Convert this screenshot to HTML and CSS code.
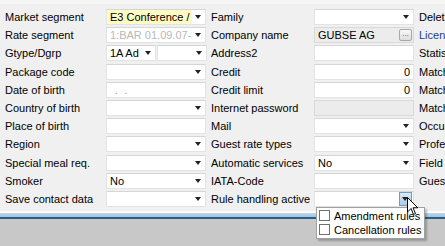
FILE: index.html
```html
<!DOCTYPE html>
<html lang="en">
<head>
    <meta charset="UTF-8">
    <title>Guest profile</title>
    <link rel="stylesheet" href="styles.css">
</head>
<body>
    <div class="panel">
        <div class="form">
            <!-- row 1 -->
            <div class="label">Market segment</div>
            <div class="field combo marked"><span class="val">E3 Conference /</span><span class="arrow"></span></div>
            <div class="label">Family</div>
            <div class="field combo"><span class="val"></span><span class="arrow"></span></div>
            <div class="label side">Delet</div>

            <div class="label">Rate segment</div>
            <div class="field combo"><span class="val muted">1:BAR 01.09.07-3</span><span class="arrow"></span></div>
            <div class="label">Company name</div>
            <div class="field grey"><span class="val">GUBSE AG</span><span class="dots">...</span></div>
            <div class="label side link">Licen</div>

            <div class="label">Gtype/Dgrp</div>
            <div class="pair">
                <div class="field combo"><span class="val">1A Ad</span><span class="arrow"></span></div>
                <div class="field combo"><span class="val"></span><span class="arrow"></span></div>
            </div>
            <div class="label">Address2</div>
            <div class="field"></div>
            <div class="label side">Statis</div>

            <div class="label">Package code</div>
            <div class="field combo"><span class="val"></span><span class="arrow"></span></div>
            <div class="label">Credit</div>
            <div class="field num">0</div>
            <div class="label side">Match</div>

            <div class="label">Date of birth</div>
            <div class="field"><span class="val date">.&nbsp;&nbsp;.</span></div>
            <div class="label">Credit limit</div>
            <div class="field num">0</div>
            <div class="label side">Match</div>

            <div class="label">Country of birth</div>
            <div class="field combo"><span class="val"></span><span class="arrow"></span></div>
            <div class="label">Internet password</div>
            <div class="field grey"></div>
            <div class="label side">Match</div>

            <div class="label">Place of birth</div>
            <div class="field"></div>
            <div class="label">Mail</div>
            <div class="field combo"><span class="val"></span><span class="arrow"></span></div>
            <div class="label side">Occu</div>

            <div class="label">Region</div>
            <div class="field combo"><span class="val"></span><span class="arrow"></span></div>
            <div class="label">Guest rate types</div>
            <div class="field combo"><span class="val"></span><span class="arrow"></span></div>
            <div class="label side">Profe</div>

            <div class="label">Special meal req.</div>
            <div class="field combo"><span class="val"></span><span class="arrow"></span></div>
            <div class="label">Automatic services</div>
            <div class="field combo"><span class="val">No</span><span class="arrow"></span></div>
            <div class="label side">Field</div>

            <div class="label">Smoker</div>
            <div class="field combo"><span class="val">No</span><span class="arrow"></span></div>
            <div class="label">IATA-Code</div>
            <div class="field"></div>
            <div class="label side">Gues</div>

            <div class="label">Save contact data</div>
            <div class="field combo"><span class="val"></span><span class="arrow"></span></div>
            <div class="label">Rule handling active</div>
            <div class="field combo open">
                <span class="val"></span><span class="arrow hot"></span>
                <div class="popup">
                    <label class="check"><span class="box"></span>Amendment rules</label>
                    <label class="check"><span class="box"></span>Cancellation rules</label>
                </div>
                <svg class="cursor" width="12" height="19" viewBox="0 0 12 19">
                    <path d="M0.5 0.5 L0.5 15 L4 11.5 L6.5 17.5 L8.5 16.5 L6 10.8 L10.8 10.8 Z" fill="#fff" stroke="#000" stroke-width="1"/>
                </svg>
            </div>
            <div class="label side"></div>
        </div>
    </div>
    <div class="statusbar"></div>
</body>
</html>
```

FILE: styles.css
```css
* {
    box-sizing: border-box;
    margin: 0;
    padding: 0;
}

body {
    width: 445px;
    height: 246px;
    overflow: hidden;
    font-family: Tahoma, "Liberation Sans", Arial, sans-serif;
    font-size: 11px;
    color: #000;
    background: #c8c8c8;
}

.panel {
    height: 212px;
    background: #f0f0f0;
    border-top: 4px solid #f6f6f6;
    border-bottom: 1px solid #fafafa;
    padding-top: 5px;
}

.form {
    display: grid;
    grid-template-columns: 101px 100px 108px 100px 1fr;
    grid-auto-rows: 16px;
    row-gap: 2.2px;
    padding-left: 5px;
}

.label {
    line-height: 16px;
    white-space: nowrap;
    overflow: hidden;
}

.form > .label:nth-child(5n+3) {
    padding-left: 5px;
}

.label.side {
    padding-left: 5px;
}

.label.link {
    color: #1d3f86;
}

.field {
    position: relative;
    display: flex;
    align-items: center;
    height: 16px;
    background: #fff;
    border: 1px solid #e3e3e3;
    border-top-color: #d6d6d6;
    line-height: 14px;
}

.field .val {
    flex: 1;
    padding-left: 3px;
    white-space: nowrap;
    overflow: hidden;
}

.field .val.muted {
    color: #b8b8b8;
}

.field .val.date {
    color: #9a9a9a;
    padding-left: 8px;
}

.field.num {
    justify-content: flex-end;
    padding-right: 3px;
}

.field.grey {
    background: #ececec;
    border-color: #d9d9d9;
}

.field.marked .val {
    background: #fffbc4;
    align-self: stretch;
    line-height: 14px;
}

.arrow {
    width: 13px;
    align-self: stretch;
    position: relative;
}

.arrow::after {
    content: "";
    position: absolute;
    left: 3px;
    top: 5px;
    border-left: 3.5px solid transparent;
    border-right: 3.5px solid transparent;
    border-top: 4px solid #222;
}

.arrow.hot {
    background: linear-gradient(#dbeaf6, #a9cbe6);
    border: 1px solid #6e9cc5;
    margin: 0 1px 0 0;
}

.arrow.hot::after {
    left: 2px;
    top: 4px;
}

.pair {
    display: grid;
    grid-template-columns: 50px 50px;
    gap: 1px;
}

.pair .field {
    width: auto;
}

.dots {
    width: 13px;
    height: 12px;
    margin-right: 1px;
    border: 1px solid #a8a8a8;
    border-radius: 2px;
    background: linear-gradient(#f8f8f8, #dcdcdc);
    font-size: 8px;
    line-height: 8px;
    text-align: center;
    color: #555;
}

.popup {
    position: absolute;
    left: 1px;
    top: 15px;
    padding: 1px 3px 1px 2px;
    background: #fff;
    border: 1px solid #a0a0a0;
    box-shadow: 2px 2px 2px rgba(0, 0, 0, 0.25);
    white-space: nowrap;
    z-index: 2;
}

.check {
    display: flex;
    align-items: center;
    gap: 4px;
    height: 14px;
    font-size: 11px;
    white-space: nowrap;
}

.box {
    width: 11px;
    height: 11px;
    border: 1px solid #707070;
    background: #fff;
}

.cursor {
    position: absolute;
    left: 92px;
    top: 5px;
    z-index: 3;
}

.statusbar {
    height: 7px;
    border-top: 1px solid #ffffff;
    background: linear-gradient(#bcd6ea, #9fc3e1);
    border-bottom: 2px solid #2c5d8a;
}
```
